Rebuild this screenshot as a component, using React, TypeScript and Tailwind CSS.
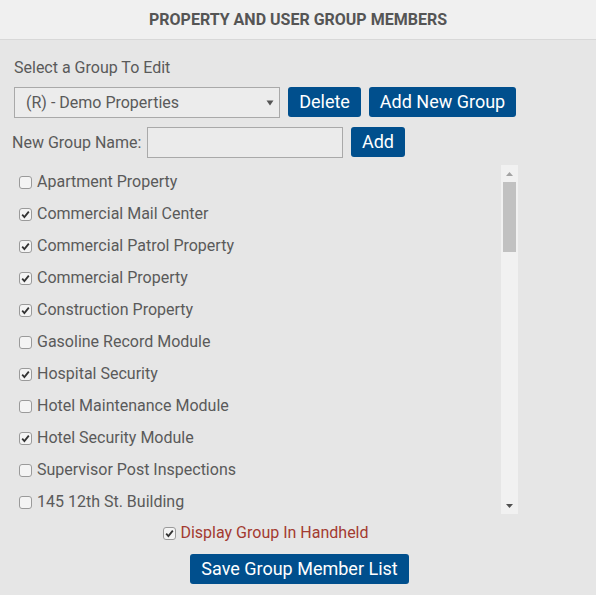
import React from "react";

const items: [string, boolean][] = [
  ["Apartment Property", false],
  ["Commercial Mail Center", true],
  ["Commercial Patrol Property", true],
  ["Commercial Property", true],
  ["Construction Property", true],
  ["Gasoline Record Module", false],
  ["Hospital Security", true],
  ["Hotel Maintenance Module", false],
  ["Hotel Security Module", true],
  ["Supervisor Post Inspections", false],
  ["145 12th St. Building", false],
];

function Box({ checked }: { checked: boolean }) {
  return (
    <span className="w-[13px] h-[13px] shrink-0 rounded-[3px] border border-[#9a9a9a] bg-[#f4f4f4] flex items-center justify-center">
      {checked && (
        <svg width="9" height="9" viewBox="0 0 9 9">
          <path d="M1.2 4.6 L3.4 7 L7.8 1.6" fill="none" stroke="#333" strokeWidth="1.8" />
        </svg>
      )}
    </span>
  );
}

const btn =
  "bg-[#004f8d] text-white text-[18px] leading-none rounded-[3px] flex items-center justify-center h-[30px]";

export default function App() {
  return (
    <div
      className="w-[596px] h-[595px] bg-[#e6e6e6] text-[#5a5a5a] overflow-hidden"
      style={{ fontFamily: "Roboto, 'Liberation Sans', sans-serif" }}
    >
      <div className="h-[40px] bg-[#f0f0f0] border-b border-[#d8d8d8] flex items-center justify-center">
        <span className="text-[16px] font-bold text-[#555]">
          PROPERTY AND USER GROUP MEMBERS
        </span>
      </div>
      <div className="pl-[14px] pt-[18px] text-[16px] leading-[19px]">Select a Group To Edit</div>
      <div className="flex pl-[14px] mt-[10px] gap-[8px]">
        <div className="w-[266px] h-[31px] border border-[#a9a9a9] bg-[#ececec] flex items-center pl-[11px] pr-[5px] justify-between">
          <span className="text-[16px] leading-[20px]">(R) - Demo Properties</span>
          <svg width="8" height="6" viewBox="0 0 8 6">
            <path d="M0.5 0.5 L7.5 0.5 L4 5.5 Z" fill="#555" />
          </svg>
        </div>
        <div className={btn + " w-[73px]"}>Delete</div>
        <div className={btn + " w-[147px]"}>Add New Group</div>
      </div>
      <div className="flex items-center pl-[12px] mt-[9px]">
        <span className="text-[16px] leading-[20px] w-[135px]">New Group Name:</span>
        <div className="w-[196px] h-[31px] border border-[#a9a9a9] bg-[#ebebeb]" />
        <div className={btn + " w-[54px] ml-[8px] mb-[1px]"}>Add</div>
      </div>
      <div className="flex mt-[7px] h-[349px]">
        <div className="w-[487px] pl-[19px] pt-[1px] overflow-hidden">
          {items.map(([name, c]) => (
            <div key={name} className="h-[32px] flex items-center gap-[5px]">
              <Box checked={c} />
              <span className="text-[16px] leading-[20px] text-[#5a5a5a]">{name}</span>
            </div>
          ))}
        </div>
        <div className="ml-[14px] w-[17px] bg-[#f1f1f1] flex flex-col items-center">
          <div className="h-[17px] flex items-center justify-center">
            <svg width="7" height="4" viewBox="0 0 7 4">
              <path d="M0 4 L3.5 0 L7 4 Z" fill="#a3a3a3" />
            </svg>
          </div>
          <div className="w-[13px] h-[70px] bg-[#c1c1c1]" />
          <div className="flex-1" />
          <div className="h-[17px] flex items-center justify-center">
            <svg width="7" height="4" viewBox="0 0 7 4">
              <path d="M0 0 L7 0 L3.5 4 Z" fill="#505050" />
            </svg>
          </div>
        </div>
      </div>
      <div className="flex items-center justify-center mt-[9px] h-[20px] gap-[4px] pr-[64px]">
        <Box checked />
        <span className="text-[16px] leading-[20px] text-[#a33a30]">Display Group In Handheld</span>
      </div>
      <div className="flex justify-center mt-[11px]">
        <div className={btn + " w-[219px] ml-[3px]"}>Save Group Member List</div>
      </div>
    </div>
  );
}
